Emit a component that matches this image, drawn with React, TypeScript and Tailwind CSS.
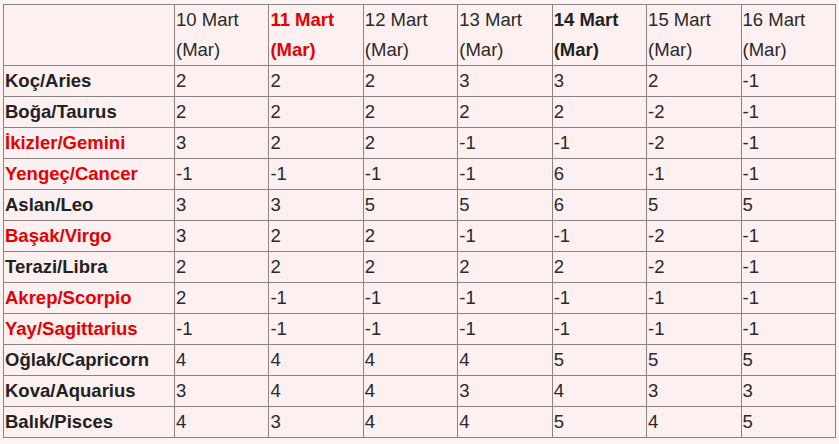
const DAYS = [
  { label: '10', style: 'normal' },
  { label: '11', style: 'red' },
  { label: '12', style: 'normal' },
  { label: '13', style: 'normal' },
  { label: '14', style: 'bold' },
  { label: '15', style: 'normal' },
  { label: '16', style: 'normal' },
]

const ROWS: { sign: string; red?: boolean; values: string[] }[] = [
  { sign: 'Koç/Aries', values: ['2', '2', '2', '3', '3', '2', '-1'] },
  { sign: 'Boğa/Taurus', values: ['2', '2', '2', '2', '2', '-2', '-1'] },
  { sign: 'İkizler/Gemini', red: true, values: ['3', '2', '2', '-1', '-1', '-2', '-1'] },
  { sign: 'Yengeç/Cancer', red: true, values: ['-1', '-1', '-1', '-1', '6', '-1', '-1'] },
  { sign: 'Aslan/Leo', values: ['3', '3', '5', '5', '6', '5', '5'] },
  { sign: 'Başak/Virgo', red: true, values: ['3', '2', '2', '-1', '-1', '-2', '-1'] },
  { sign: 'Terazi/Libra', values: ['2', '2', '2', '2', '2', '-2', '-1'] },
  { sign: 'Akrep/Scorpio', red: true, values: ['2', '-1', '-1', '-1', '-1', '-1', '-1'] },
  { sign: 'Yay/Sagittarius', red: true, values: ['-1', '-1', '-1', '-1', '-1', '-1', '-1'] },
  { sign: 'Oğlak/Capricorn', values: ['4', '4', '4', '4', '5', '5', '5'] },
  { sign: 'Kova/Aquarius', values: ['3', '4', '4', '3', '4', '3', '3'] },
  { sign: 'Balık/Pisces', values: ['4', '3', '4', '4', '5', '4', '5'] },
]

export default function App() {
  return (
    <div
      className="min-h-[444px] bg-[#fdf3f3] pt-[4px] pl-[3px] text-[18.5px] leading-[30px] text-[#222222]"
      style={{ fontFamily: '"Liberation Sans", Arial, sans-serif' }}
    >
      <table className="w-[833px] table-fixed border-collapse bg-[#fdf0f0]">
        <colgroup>
          <col className="w-[171px]" />
          {DAYS.map((d) => <col key={d.label} />)}
        </colgroup>
        <thead>
          <tr>
            <th className="border border-[#8a8585] p-0" />
            {DAYS.map((d) => (
              <th
                key={d.label}
                className={
                  'border border-[#8a8585] px-[1px] py-0 text-left align-top ' +
                  (d.style === 'red'
                    ? 'font-bold text-[#e60000]'
                    : d.style === 'bold'
                      ? 'font-bold text-[#222222]'
                      : 'font-normal text-[#2a2a2a]')
                }
              >
                {d.label} Mart
                <br />
                (Mar)
              </th>
            ))}
          </tr>
        </thead>
        <tbody>
          {ROWS.map((r) => (
            <tr key={r.sign}>
              <td
                className={
                  'overflow-hidden whitespace-nowrap border border-[#8a8585] px-[1px] py-0 font-bold ' +
                  (r.red ? 'text-[#e60000]' : 'text-[#222222]')
                }
              >
                {r.sign}
              </td>
              {r.values.map((v, i) => (
                <td key={i} className="border border-[#8a8585] px-[1px] py-0 text-[#2a2a2a]">
                  {v}
                </td>
              ))}
            </tr>
          ))}
        </tbody>
      </table>
    </div>
  )
}
